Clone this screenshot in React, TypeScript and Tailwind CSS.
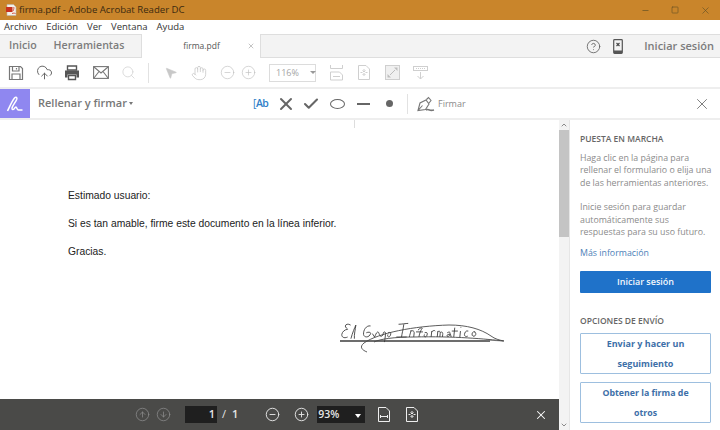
import { ChevronDown, ChevronUp, X, Minus, Square, CloudUpload, Search, Hand, MousePointer2, CircleMinus, CirclePlus, CircleHelp, CircleArrowUp, CircleArrowDown, Check } from 'lucide-react';

const font = { fontFamily: '"Open Sans", sans-serif' };

function ToolbarDivider() {
  return <div className="h-[20px] w-px bg-[#e2e2e2]" />;
}

function SaveIcon() {
  return (
    <svg width="16" height="16" viewBox="0 0 16 16" fill="none" stroke="#777" strokeWidth="1.2">
      <path d="M1.5 1.5h11l2 2v11h-13z" />
      <path d="M4.5 1.5v4.5h6.5v-4.5M4 14.500v-5.500h8v5.500M8.500 3v1.500" />
    </svg>
  );
}

function PrintIcon() {
  return (
    <svg width="16" height="16" viewBox="0 0 16 16">
      <path d="M3.500 1h9v4h-9z" fill="none" stroke="#555" strokeWidth="1.400" />
      <path d="M1 5.500h14v7h-2.500v-3h-9v3H1z" fill="#555" />
      <path d="M4.500 10.500h7v4h-7z" fill="none" stroke="#555" strokeWidth="1.400" />
    </svg>
  );
}

function MailIcon() {
  return (
    <svg width="16" height="13" viewBox="0 0 16 13" fill="none" stroke="#777" strokeWidth="1.100">
      <rect x=".6" y=".6" width="14.800" height="11.800" />
      <path d="M1 1l7 6 7-6M1 12l5-6.500M15 12l-5-6.500" />
    </svg>
  );
}

function FitWidthIcon() {
  return (
    <svg width="13" height="17" viewBox="0 0 13 17" fill="none" stroke="#cfcfcf" strokeWidth="1">
      <path d="M.5 1v3.500h12V1M.5 16V8h9l3 3v5zM3 12.500h7" />
    </svg>
  );
}

function PageFitIcon({ stroke = '#cfcfcf' }: { stroke?: string }) {
  return (
    <svg width="12" height="15" viewBox="0 0 12 15" fill="none" stroke={stroke} strokeWidth="1">
      <path d="M.5.5h7.500l3.500 3.500v10.500h-11zM6 4v3M4.500 5.500 6 7l1.500-1.500M6 11V8.500M4.500 10 6 8.500 7.500 10M2.500 7.500h2M7.500 7.500h2" />
    </svg>
  );
}

function PageWidthIcon() {
  return (
    <svg width="12" height="15" viewBox="0 0 12 15" fill="none" stroke="#eeeeee" strokeWidth="1">
      <path d="M.5.5h7.500l3.500 3.500v10.500h-11zM2.500 9.500h7M2.500 8v3M9.500 8v3" />
    </svg>
  );
}

function ExpandIcon() {
  return (
    <svg width="15" height="15" viewBox="0 0 15 15">
      <rect x=".5" y=".5" width="14" height="14" fill="#f0f0f0" stroke="#cfcfcf" />
      <path d="M9 2.500h3.500V6zM2.500 9v3.500H6z" fill="#bdbdbd" />
      <path d="M5 10l5-5" stroke="#bdbdbd" />
    </svg>
  );
}

function ReadIcon() {
  return (
    <svg width="15" height="14" viewBox="0 0 15 14" fill="none" stroke="#cfcfcf">
      <rect x=".5" y=".5" width="14" height="4" />
      <path d="M3 2.500h9" strokeDasharray="1 1" />
      <path d="M7.500 6v7M4.500 10l3 3 3-3" />
    </svg>
  );
}

function PenIcon() {
  return (
    <svg width="18" height="18" viewBox="0 0 18 18" fill="none" stroke="#fff" strokeWidth="1.500">
      <path d="M1.500 16c2-4 4.500-10 7-13 1.500-1.600 3-.5 2.200 1.500-1.300 3-4.200 6-4.700 8.500-.3 1.800 1.200 1.800 2.200.7 1-1.100 1.800-2.200 2.300-1.200.5 1 .8 2.500 2 2.500h4" />
    </svg>
  );
}

function FirmarIcon() {
  return (
    <svg width="18" height="16" viewBox="0 0 18 16" fill="none" stroke="#777" strokeWidth="1.100">
      <path d="M1 14.500 3 7l6-3 3 4-3.500 5.500zM1 14.500 5.500 9.500M9.500 3.500l2-2 2.500 3-2 2.500" />
      <path d="M9 14c1.500-1 2.500-.5 3.500 0s2.500.5 4.500 0" strokeWidth="1.600" />
    </svg>
  );
}

function PdfIcon() {
  return (
    <svg width="11" height="12" viewBox="0 0 11 12">
      <path d="M1 .5h6.500L10 3v8.500H1z" fill="#f4efe8" stroke="#b9b3aa" strokeWidth=".6" />
      <rect x="0" y="3" width="6.500" height="5" fill="#c8321e" />
      <path d="M7 7c1-2 1-3 .7-4M6 9.500c1.500-.5 2.500-.5 3.500 0" stroke="#c8321e" strokeWidth=".8" fill="none" />
    </svg>
  );
}

function MobileIcon() {
  return (
    <svg width="10" height="15" viewBox="0 0 10 15">
      <rect x=".7" y=".7" width="8.600" height="13.600" rx=".8" fill="none" stroke="#555" strokeWidth="1.200" />
      <rect x="1" y="11.500" width="8" height="2.500" fill="#555" />
      <path d="M3.500 4 6.500 7M6.500 4 3.500 7" stroke="#444" strokeWidth="1.100" />
    </svg>
  );
}

function Signature() {
  return (
    <svg width="170" height="44" viewBox="0 0 170 44" fill="none" stroke="#3c3c3c" strokeWidth="1">
      <path d="M4 20h150" stroke="#3c3c3c" strokeWidth="1.700" />
      <path d="M150 19l17 1" stroke="#777" strokeWidth=".8" />
      <g transform="translate(3 -1) scale(.87 .85) skewX(-6)">
        <path d="M14 6c-3-2-6-1-6 1s3 3 3 4c-3 0-6 3-6 6s3 5 7 3M16 22c1-7 3-13 4-16 0 5-1 11 0 16" />
        <path d="M37 7c-5-1-8 5-7 10 1 4 7 4 8-1 0-2-3-2-5-1M40 16l3 4c1-2 1-5 3-6 2 0 2 6 5 5 3-1 0-5 3-5 2 0 1 8 1 12M58 15c2-1 4 0 3 3-1 3-4 2-3-1" />
        <path d="M69 5c4 0 8-1 11-1M75 5c0 6-1 11-1 15M68 20h12M84 12c0 3-1 6-1 8M84 13c2-1 4 0 4 2v5M92 12c3-4 6-3 4-1-1 2-2 6-2 9M90 14h8M100 15c2-1 4 0 3 3-1 3-4 2-3-1M108 13v7M108 14c2-2 3-2 4-1M115 13v7M115 14c2-2 3 0 3 2v4M118 15c2-2 3 0 3 2v3" />
        <path d="M126 15c3-2 4 0 3 3-1 2-3 2-3 0 0 0 2-2 4-1l1 3M134 9v11M131 13h7M141 13v7M141 8v1M150 13c-3-1-4 2-4 4 0 2 2 3 4 2M158 14c-3-1-4 2-3 4 1 2 4 1 4-1s-1-3-2-3" />
      </g>
      <path d="M31 31c-5-2-8-5-3-9 14-10 50-17 85-18 18 0 32 4 42 11 4 3 8 4 13 5-18-2-50-5-90-4-20 0-34 2-40 5" stroke="#4a4a4a" strokeWidth=".9" />
    </svg>
  );
}

export default function App() {
  return (
    <div className="flex h-[430px] w-[720px] flex-col overflow-hidden bg-white text-[#4b4b4b]" style={font}>
      {/* title bar */}
      <div className="flex h-[20px] items-center bg-[#c9852b] pl-[6px] text-[9.600px] text-[#3b2a10]">
        <PdfIcon />
        <span className="ml-[2px]">firma.pdf - Adobe Acrobat Reader DC</span>
        <div className="ml-auto flex items-center gap-[21px] pr-[9px] text-[#6b5526]">
          <Minus size={9} strokeWidth={2} />
          <Square size={8} strokeWidth={2} />
          <X size={11} strokeWidth={1.500} />
        </div>
      </div>

      {/* menu */}
      <div className="flex h-[14px] items-center gap-[9px] pl-[4px] pt-[1px] text-[9.500px] text-[#333]">
        <span>Archivo</span>
        <span>Edición</span>
        <span>Ver</span>
        <span>Ventana</span>
        <span>Ayuda</span>
      </div>

      {/* tabs */}
      <div className="flex h-[24px] items-stretch border-y border-[#dedede] bg-[#f3f3f3] text-[10.600px] font-semibold text-[#7c7c7c]">
        <div className="flex w-[141px] items-center gap-[17px] pl-[9px]">
          <span>Inicio</span>
          <span>Herramientas</span>
        </div>
        <div className="-my-px flex w-[120px] items-center border-x border-[#dedede] bg-white pr-[5px] text-[8.500px] font-normal text-[#555]">
          <span className="flex-1 pl-[14px] text-center">firma.pdf</span>
          <X size={8} strokeWidth={1.500} className="text-[#888]" />
        </div>
        <div className="ml-auto flex items-center pr-[6px]">
          <CircleHelp size={15} strokeWidth={1.400} className="text-[#666]" />
          <div className="ml-[12px]"><MobileIcon /></div>
          <span className="ml-[21px] text-[11px]">Iniciar sesión</span>
        </div>
      </div>

      {/* tools */}
      <div className="flex h-[31px] items-center border-b-2 border-[#eeeeee] pl-[8px]">
        <SaveIcon />
        <CloudUpload size={17} strokeWidth={1.400} className="ml-[12px] text-[#666]" />
        <div className="ml-[11px]"><PrintIcon /></div>
        <div className="ml-[13px]"><MailIcon /></div>
        <Search size={15} strokeWidth={1.300} className="ml-[12px] text-[#d4d4d4]" />
        <div className="ml-[12px]"><ToolbarDivider /></div>
        <MousePointer2 size={14} strokeWidth={1} className="ml-[15px] fill-[#c8c8c8] text-[#c8c8c8]" />
        <Hand size={16} strokeWidth={1.200} className="ml-[13px] text-[#c8c8c8]" />
        <CircleMinus size={15} strokeWidth={1} className="ml-[13px] text-[#bdbdbd]" />
        <CirclePlus size={15} strokeWidth={1} className="ml-[6px] text-[#bdbdbd]" />
        <div className="ml-[13px] flex h-[18px] w-[47px] items-center border border-[#dcdcdc] pl-[6px] text-[9px] text-[#a5a5a5]">
          116%
          <span className="ml-[11px] h-0 w-0 border-x-[3px] border-t-[3px] border-x-transparent border-t-[#999]" />
        </div>
        <div className="ml-[14px]"><FitWidthIcon /></div>
        <div className="ml-[15px]"><PageFitIcon /></div>
        <div className="ml-[15px]"><ExpandIcon /></div>
        <div className="ml-[13px]"><ReadIcon /></div>
      </div>

      {/* fill and sign bar */}
      <div className="flex h-[31px] items-center border-b-2 border-[#eeeeee]">
        <div className="flex h-full w-[30px] items-center justify-center bg-[#8f87f0]">
          <PenIcon />
        </div>
        <span className="ml-[8px] text-[11px] font-semibold text-[#777]">Rellenar y firmar</span>
        <span className="ml-[2px] h-0 w-0 border-x-[2px] border-t-[3px] border-x-transparent border-t-[#777]" />
        <div className="ml-[120px] flex items-center">
          <span className="w-[16px] text-[10.500px] font-semibold tracking-[-0.5px] text-[#2f7fc8]"><span className="font-normal">[</span>Ab</span>
          <X size={20} strokeWidth={2.400} className="ml-[7px] text-[#666]" />
          <Check size={18} strokeWidth={2.800} className="ml-[6px] text-[#666]" />
          <span className="ml-[10px] h-[10px] w-[15px] rounded-[50%] border-[1.500px] border-[#666]" />
          <span className="ml-[12px] h-[2px] w-[13px] bg-[#666]" />
          <span className="ml-[16px] h-[7px] w-[7px] rounded-full bg-[#666]" />
          <div className="ml-[14px]"><ToolbarDivider /></div>
          <div className="ml-[9px]"><FirmarIcon /></div>
          <span className="ml-[3px] text-[9px] text-[#8a8a8a]">Firmar</span>
        </div>
        <X size={18} strokeWidth={1} className="ml-auto mr-[9px] text-[#555]" />
      </div>

      {/* body */}
      <div className="flex min-h-0 flex-1">
        {/* document */}
        <div className="relative flex-1 bg-white">
          <div className="absolute left-[354px] top-0 h-[8px] w-px bg-[#dddddd]" />
          <div className="flex flex-col pl-[68px] pt-[69px] text-[10.300px] leading-[14px] text-[#222]" style={{ fontFamily: '"Liberation Sans", Arial, sans-serif' }}>
            <p>Estimado usuario:</p>
            <p className="mt-[14px]">Si es tan amable, firme este documento en la línea inferior.</p>
            <p className="mt-[14px]">Gracias.</p>
          </div>
          <div className="absolute left-[336px] top-[201px]">
            <Signature />
          </div>
          {/* page controls */}
          <div className="absolute inset-x-0 bottom-0 flex h-[31px] items-center bg-[#4a4a48] pl-[135px] text-[#e6e6e6]">
            <CircleArrowUp size={15} strokeWidth={1.200} className="text-[#8c8c8c]" />
            <CircleArrowDown size={15} strokeWidth={1.200} className="ml-[6px] text-[#8c8c8c]" />
            <div className="ml-[14px] flex h-[17px] w-[32px] items-center justify-end bg-[#1f1f1f] pr-[2px] text-[11px] font-semibold">1</div>
            <span className="ml-[5px] text-[11px]">/</span>
            <span className="ml-[6px] text-[11px] font-semibold">1</span>
            <CircleMinus size={15} strokeWidth={1.500} className="ml-[27px]" />
            <CirclePlus size={15} strokeWidth={1.500} className="ml-[14px]" />
            <div className="ml-[8px] flex h-[17px] w-[48px] items-center bg-[#1f1f1f] pl-[1px] text-[10.500px] font-semibold">
              93%
              <span className="ml-auto mr-[4px] mt-[3px] h-0 w-0 border-x-[3.500px] border-t-[4px] border-x-transparent border-t-white" />
            </div>
            <div className="ml-[13px]"><PageWidthIcon /></div>
            <div className="ml-[16px]"><PageFitIcon stroke="#eeeeee" /></div>
            <X size={14} strokeWidth={1.800} className="ml-auto mr-[11px] text-white" />
          </div>
        </div>

        {/* scrollbar */}
        <div className="flex w-[11px] flex-col items-center border-r border-[#e6e6e6] bg-[#f3f3f3]">
          <ChevronUp size={8} strokeWidth={2} className="my-[1px] text-[#555]" />
          <div className="h-[107px] w-full bg-[#c4c4c4]" />
          <ChevronDown size={8} strokeWidth={2} className="mb-[1px] mt-auto text-[#555]" />
        </div>

        {/* right panel */}
        <div className="flex w-[150px] flex-col pl-[10px] pr-[6px] pt-[13px] text-[8.800px] leading-[12.500px] text-[#8b8b8b]">
          <h4 className="text-[8.500px] font-semibold text-[#666]">PUESTA EN MARCHA</h4>
          <p className="mt-[6px]">Haga clic en la página para rellenar el formulario o elija una de las herramientas anteriores.</p>
          <p className="mt-[12px] pr-[6px]">Inicie sesión para guardar automáticamente sus respuestas para su uso futuro.</p>
          <span className="mt-[8px] text-[#4d7fb8]">Más información</span>
          <button className="mt-[12px] h-[22px] w-[131px] shrink-0 rounded-[1px] bg-[#1f72c9] text-[9px] font-semibold text-[#f2f7fc]">Iniciar sesión</button>
          <h4 className="mt-[22px] text-[8.500px] font-semibold text-[#666]">OPCIONES DE ENVÍO</h4>
          <button className="mt-[5px] h-[41px] w-[131px] shrink-0 rounded-[1px] border border-[#9dbfdf] px-[14px] text-[9px] font-bold leading-[20px] text-[#3d6fa8]">Enviar y hacer un seguimiento</button>
          <button className="mt-[8px] h-[41px] w-[131px] shrink-0 rounded-[1px] border border-[#9dbfdf] px-[14px] text-[8.800px] font-bold leading-[20px] text-[#3d6fa8]">Obtener la firma de otros</button>
        </div>
      </div>
    </div>
  );
}
